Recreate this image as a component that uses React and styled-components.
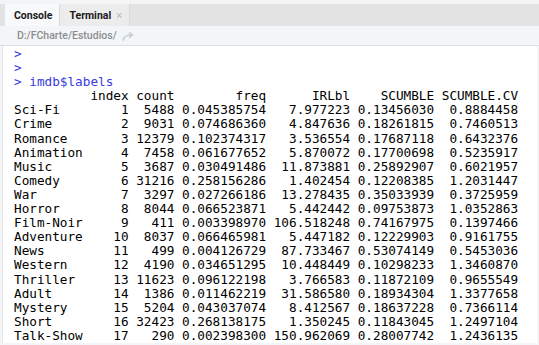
import styled, { createGlobalStyle } from 'styled-components';

const GlobalStyle = createGlobalStyle`
  html, body { margin: 0; padding: 0; background: #fff; }
`;

const Pane = styled.div`
  width: 539px;
  height: 345px;
  display: flex;
  flex-direction: column;
  background: #f3f5f7;
  overflow: hidden;
  font-family: "Roboto", "Liberation Sans", sans-serif;
`;

const TabBar = styled.div`
  display: flex;
  align-items: stretch;
  height: 22px;
  margin-top: 4px;
  padding-left: 5px;
  background: #e3e3e3;
`;

const Tab = styled.div`
  display: flex;
  align-items: center;
  gap: 5px;
  padding: 1px 7px 0 9px;
  background: ${(p) => (p.$active ? '#f7f9fa' : '#ececec')};
  border-right: 1px solid #dadada;
  font-size: 10.5px;
  font-weight: 700;
  color: #1b1b1b;
`;

const Close = styled.span`
  color: #b8b8b8;
  font-size: 11px;
  font-weight: 400;
`;

const PathBar = styled.div`
  display: flex;
  align-items: center;
  gap: 5px;
  height: 19px;
  padding-left: 17px;
  background: #f3f6f8;
  border-bottom: 1px solid #dcdedf;
  font-size: 10.5px;
  font-weight: 500;
  color: #8a8d90;
`;

const Console = styled.pre`
  flex: 1;
  margin: 0 2px 2px 2px;
  padding: 1px 0 0 11px;
  background: #fff;
  border-left: 1px solid #e4e6e8;
  font-family: "DejaVu Sans Mono", "Liberation Mono", monospace;
  font-size: 12.7px;
  line-height: 14.1px;
  color: #000;
  white-space: pre;
`;

const Prompt = styled.span`
  color: #3a3adf;
`;

const rows = [
  ['Sci-Fi', 1, 5488, '0.045385754', '7.977223', '0.13456030', '0.8884458'],
  ['Crime', 2, 9031, '0.074686360', '4.847636', '0.18261815', '0.7460513'],
  ['Romance', 3, 12379, '0.102374317', '3.536554', '0.17687118', '0.6432376'],
  ['Animation', 4, 7458, '0.061677652', '5.870072', '0.17700698', '0.5235917'],
  ['Music', 5, 3687, '0.030491486', '11.873881', '0.25892907', '0.6021957'],
  ['Comedy', 6, 31216, '0.258156286', '1.402454', '0.12208385', '1.2031447'],
  ['War', 7, 3297, '0.027266186', '13.278435', '0.35033939', '0.3725959'],
  ['Horror', 8, 8044, '0.066523871', '5.442442', '0.09753873', '1.0352863'],
  ['Film-Noir', 9, 411, '0.003398970', '106.518248', '0.74167975', '0.1397466'],
  ['Adventure', 10, 8037, '0.066465981', '5.447182', '0.12229903', '0.9161755'],
  ['News', 11, 499, '0.004126729', '87.733467', '0.53074149', '0.5453036'],
  ['Western', 12, 4190, '0.034651295', '10.448449', '0.10298233', '1.3460870'],
  ['Thriller', 13, 11623, '0.096122198', '3.766583', '0.11872109', '0.9655549'],
  ['Adult', 14, 1386, '0.011462219', '31.586580', '0.18934304', '1.3377658'],
  ['Mystery', 15, 5204, '0.043037074', '8.412567', '0.18637228', '0.7366114'],
  ['Short', 16, 32423, '0.268138175', '1.350245', '0.11843045', '1.2497104'],
  ['Talk-Show', 17, 290, '0.002398300', '150.962069', '0.28007742', '1.2436135'],
];

const widths = [6, 6, 12, 11, 11, 11];
const header = ['index', 'count', 'freq', 'IRLbl', 'SCUMBLE', 'SCUMBLE.CV'];

const fmt = (r) =>
  r[0].padEnd(9) + r.slice(1).map((v, i) => String(v).padStart(widths[i])).join('');

function ForwardIcon() {
  return (
    <svg width="14" height="10" viewBox="0 0 14 10">
      <path
        d="M1 9 C2 5 5 4 10 4 M7.5 1.5 L10.5 4 L7.5 6.5"
        fill="none"
        stroke="#c9cdd1"
        strokeWidth="1.6"
        strokeLinecap="round"
        strokeLinejoin="round"
      />
    </svg>
  );
}

export default function App() {
  const table = [
    ''.padEnd(9) + header.map((h, i) => h.padStart(widths[i])).join(''),
    ...rows.map(fmt),
  ];
  return (
    <>
      <GlobalStyle />
      <Pane>
        <TabBar>
          <Tab $active>Console</Tab>
          <Tab>
            Terminal <Close>×</Close>
          </Tab>
        </TabBar>
        <PathBar>
          D:/FCharte/Estudios/
          <ForwardIcon />
        </PathBar>
        <Console>
          <Prompt>{'>\n>\n> imdb$labels'}</Prompt>
          {'\n' + table.join('\n')}
        </Console>
      </Pane>
    </>
  );
}
